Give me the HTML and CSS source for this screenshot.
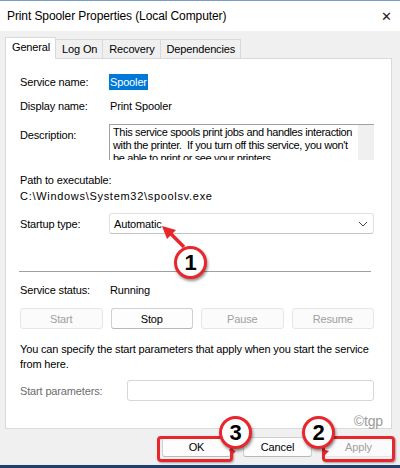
FILE: index.html
```html
<!DOCTYPE html>
<html lang="en">
<head>
  <meta charset="UTF-8" />
  <title>Print Spooler Properties (Local Computer)</title>
  <link rel="stylesheet" href="styles.css">
</head>
<body>
  <div class="window">
    <div class="titlebar">
      <span class="title">Print Spooler Properties (Local Computer)</span>
      <span class="close">&#x2715;</span>
    </div>

    <div class="tabs">
      <div class="tab active">General</div>
      <div class="tab">Log On</div>
      <div class="tab">Recovery</div>
      <div class="tab">Dependencies</div>
    </div>

    <div class="panel">
      <div class="row">
        <span class="label">Service name:</span>
        <span class="selected">Spooler</span>
      </div>
      <div class="row r-display">
        <span class="label">Display name:</span>
        <span>Print Spooler</span>
      </div>
      <div class="row r-desc">
        <span class="label">Description:</span>
        <div class="desc-box">
          <div class="desc-text">This service spools print jobs and handles interaction<br>with the printer.&nbsp; If you turn off this service, you won't<br>be able to print or see your printers.</div>
          <div class="scroll"></div>
        </div>
      </div>
      <div class="path-label">Path to executable:</div>
      <div class="path">C:\Windows\System32\spoolsv.exe</div>
      <div class="row r-startup">
        <span class="label">Startup type:</span>
        <div class="combo">
          <span>Automatic</span>
          <svg width="10" height="6" viewBox="0 0 10 6"><path d="M1 1 L5 5 L9 1" fill="none" stroke="#444" stroke-width="1"/></svg>
        </div>
      </div>

      <div class="separator"></div>

      <div class="row r-status">
        <span class="label">Service status:</span>
        <span>Running</span>
      </div>
      <div class="svc-buttons">
        <button class="btn" disabled>Start</button>
        <button class="btn">Stop</button>
        <button class="btn" disabled>Pause</button>
        <button class="btn" disabled>Resume</button>
      </div>
      <p class="hint">You can specify the start parameters that apply when you start the service from here.</p>
      <div class="row r-params">
        <span class="label param-label">Start parameters:</span>
        <div class="param-input"></div>
      </div>
    </div>

    <div class="footer">
      <span class="watermark">&copy;tgp</span>
      <button class="btn dlg">OK</button>
      <button class="btn dlg">Cancel</button>
      <button class="btn dlg" disabled>Apply</button>
    </div>
  </div>
  <div class="taskbar"></div>

  <!-- annotation overlay -->
  <div class="mark mark-ok"></div>
  <div class="mark mark-apply"></div>
  <svg class="arrow" width="400" height="468" viewBox="0 0 400 468">
    <line x1="184" y1="247" x2="170" y2="233" stroke="#e8262b" stroke-width="3.5"/>
    <polygon points="162,226 176,230 167,239" fill="#e8262b"/>
    <polygon points="229,449 236,451 231,456" fill="#e8262b"/>
    <polygon points="322,449 329,451 324,456" fill="#e8262b"/>
  </svg>
  <div class="badge b1">1</div>
  <div class="badge b3">3</div>
  <div class="badge b2">2</div>
</body>
</html>
```

FILE: styles.css
```css
body {
  margin: 0;
  width: 400px;
  height: 468px;
  overflow: hidden;
  background: #1f3f6e;
  font-family: 'Liberation Sans', Arial, sans-serif;
  font-size: 11px;
  letter-spacing: -0.15px;
  color: #000;
  position: relative;
}

.window {
  height: 465px;
  background: #f0f0f0;
  border-top: 1px solid #7a9cc6;
  box-sizing: border-box;
  display: flex;
  flex-direction: column;
}

.titlebar {
  height: 30px;
  background: #fff;
  display: flex;
  align-items: center;
  justify-content: space-between;
  padding: 0 8px 0 7px;
}

.title {
  font-size: 12px;
  letter-spacing: -0.1px;
}

.close {
  font-size: 13px;
  color: #222;
}

.tabs {
  display: flex;
  padding: 7px 0 0 5px;
  height: 20px;
  align-items: flex-end;
}

.tab {
  height: 18px;
  line-height: 18px;
  padding: 0 5px 0 6px;
  background: #f0f0f0;
  border: 1px solid #d9d9d9;
  border-bottom: none;
  margin-left: -1px;
}

.tab.active {
  height: 21px;
  line-height: 19px;
  background: #fff;
  position: relative;
  z-index: 1;
  margin-left: 0;
  padding: 0 5px 0 6px;
  margin-bottom: -1px;
}

.panel {
  margin: 0 8px 0 5px;
  height: 371px;
  box-sizing: border-box;
  background: #fff;
  border: 1px solid #d9d9d9;
  padding: 15px 17px 0 14px;
}

.row {
  display: flex;
  align-items: center;
  line-height: 16px;
}

.label {
  width: 90px;
  flex-shrink: 0;
}

.selected {
  background: #0078d7;
  color: #fff;
  padding: 0 1px;
  margin-left: -1px;
}

.r-display {
  margin-top: 8px;
}

.r-desc {
  margin-top: 10px;
  align-items: flex-start;
}

.r-desc .label {
  padding-top: 3px;
}

.desc-box {
  flex: 1;
  height: 35px;
  margin-left: -1px;
  border-top: 1px solid #a0a0a0;
  border-left: 1px solid #a0a0a0;
  display: flex;
  overflow: hidden;
}

.desc-text {
  flex: 1;
  min-width: 0;
  overflow: hidden;
  white-space: nowrap;
  padding: 1px 0 0 3px;
  font-size: 11px;
  letter-spacing: -0.35px;
  line-height: 13px;
}

.scroll {
  width: 16px;
  flex-shrink: 0;
  background: #f0f0f0;
}

.path-label {
  margin-top: 12px;
  line-height: 16px;
}

.path {
  line-height: 16px;
  letter-spacing: 0.7px;
}

.r-startup {
  margin-top: 9px;
}

.combo {
  flex: 1;
  height: 21px;
  margin-left: -1px;
  box-sizing: border-box;
  border: 1px solid #e1e1e1;
  border-bottom-color: #c4c4c4;
  border-radius: 3px;
  display: flex;
  align-items: center;
  justify-content: space-between;
  padding: 0 5px 0 4px;
}

.separator {
  height: 1px;
  background: #a0a0a0;
  margin: 37px 3px 0 -1px;
}

.r-status {
  margin-top: 10px;
}

.svc-buttons {
  display: flex;
  gap: 8px;
  margin-top: 10px;
}

.btn {
  font-family: inherit;
  font-size: 11px;
  letter-spacing: -0.15px;
  height: 21px;
  width: 83px;
  padding: 0;
  background: #fdfdfd;
  border: 1px solid #d0d0d0;
  border-bottom-color: #b8b8b8;
  border-radius: 3px;
  color: #000;
}

.btn:disabled {
  color: #a0a0a0;
  background: #fbfbfb;
  border-color: #e6e6e6;
}

.hint {
  margin: 13px 0 0;
  line-height: 15px;
}

.r-params {
  margin-top: 8px;
}

.param-label {
  width: 107px;
  color: #6d6d6d;
}

.param-input {
  flex: 1;
  height: 21px;
  box-sizing: border-box;
  border: 1px solid #d6d6d6;
  border-radius: 3px;
}

.footer {
  position: relative;
  display: flex;
  justify-content: flex-end;
  gap: 12px;
  padding: 8px 7px 0 0;
}

.btn.dlg {
  width: 69px;
  height: 20px;
}

.watermark {
  position: absolute;
  right: 17px;
  top: -16px;
  font-size: 14px;
  color: #9a9a9a;
}

.taskbar {
  height: 3px;
}

/* annotations */
.mark {
  position: absolute;
  height: 20px;
  border: 3px solid #e8262b;
  border-radius: 4px;
  box-shadow: 1px 1px 2px rgba(0, 0, 0, 0.35);
}

.mark-ok {
  left: 157px;
  top: 436px;
  width: 70px;
}

.mark-apply {
  left: 322px;
  top: 436px;
  width: 67px;
}

.arrow {
  position: absolute;
  left: 0;
  top: 0;
}

.badge {
  position: absolute;
  width: 27px;
  height: 27px;
  border: 3px solid #e8262b;
  border-radius: 50%;
  background: #fff;
  box-shadow: 1px 2px 3px rgba(0, 0, 0, 0.45);
  font-weight: bold;
  font-size: 22px;
  letter-spacing: 0;
  line-height: 27px;
  text-align: center;
}

.b1 {
  left: 174px;
  top: 246px;
}

.b3 {
  left: 219px;
  top: 416px;
}

.b2 {
  left: 302px;
  top: 416px;
}
```
